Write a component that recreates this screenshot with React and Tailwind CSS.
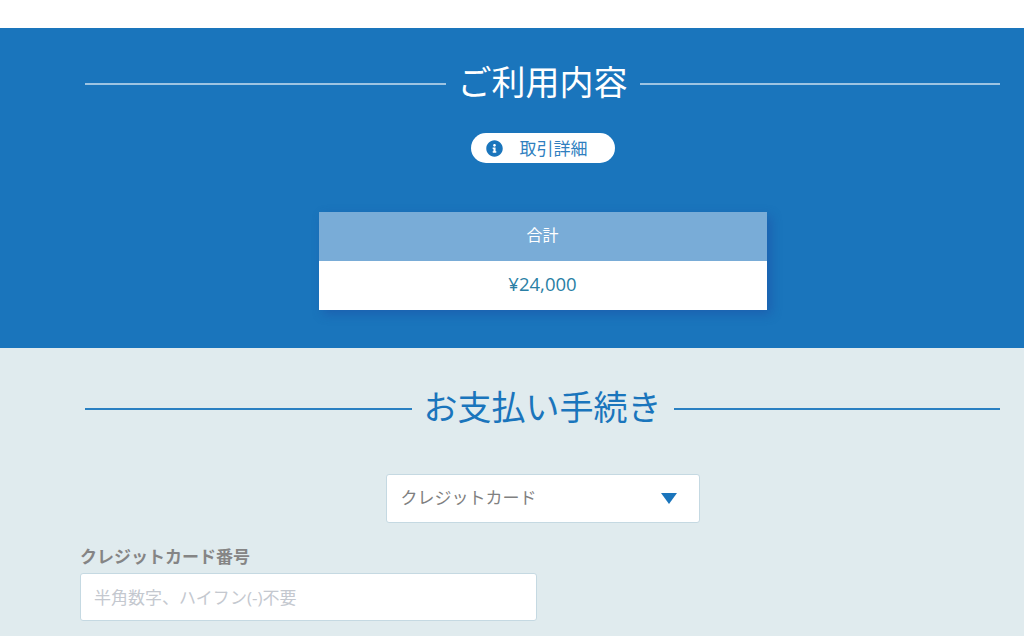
import React from "react";

const font = {
  fontFamily: '"Open Sans", "Noto Sans CJK JP", sans-serif',
};

function Heading({ children, line, text }) {
  return (
    <div className="flex items-center">
      <div className={`flex-1 h-[2px] ${line}`}></div>
      <h2 className={`px-[12px] pb-[4px] text-[34px] leading-[44px] font-normal ${text}`}>{children}</h2>
      <div className={`flex-1 h-[2px] ${line}`}></div>
    </div>
  );
}

function InfoIcon() {
  return (
    <svg width="17" height="17" viewBox="0 0 512 512" fill="#1a75bc">
      <path d="M256 8C119 8 8 119 8 256s111 248 248 248 248-111 248-248S393 8 256 8zm0 110c23 0 42 19 42 42s-19 42-42 42-42-19-42-42 19-42 42-42zm56 254c0 7-5 12-12 12h-88c-7 0-12-5-12-12v-24c0-7 5-12 12-12h12v-64h-12c-7 0-12-5-12-12v-24c0-7 5-12 12-12h64c7 0 12 5 12 12v100h12c7 0 12 5 12 12v24z" />
    </svg>
  );
}

export default function App() {
  return (
    <div className="w-[1024px] h-[636px] overflow-hidden bg-white" style={font}>
      <div className="h-[28px] bg-white"></div>

      <section className="h-[320px] bg-[#1a75bc] pt-[32px] pl-[85px] pr-[24px]">
        <Heading line="bg-[#9dc4e2]" text="text-white">ご利用内容</Heading>

        <div className="flex justify-center mt-[25px]">
          <button className="w-[144px] h-[30px] rounded-full bg-white flex items-center pl-[15px] text-[#2f7fbf] text-[17px]">
            <InfoIcon />
            <span className="ml-[17px] pt-[2px]">取引詳細</span>
          </button>
        </div>

        <div className="w-[448px] mx-auto mt-[49px] shadow-[4px_4px_10px_rgba(30,70,160,0.45)]">
          <div className="h-[49px] bg-[#79acd7] flex items-center justify-center text-white text-[16px] pb-[3px]">合計</div>
          <div className="h-[49px] bg-white flex items-center justify-center text-[#2a7fa5] text-[18.5px] pb-[3px]">¥24,000</div>
        </div>
      </section>

      <section className="h-[288px] bg-[#e0ebee] pt-[37px]">
        <div className="pl-[85px] pr-[24px]">
          <Heading line="bg-[#2a80c2]" text="text-[#1a75bc]">お支払い手続き</Heading>

          <div className="flex justify-center mt-[41px]">
            <div className="w-[314px] h-[49px] bg-white border border-[#c5d9e2] rounded-[3px] flex items-center justify-between pl-[14px] pr-[22px] text-[17px] text-[#808080]">
              <span className="pb-[2px]">クレジットカード</span>
              <svg width="16" height="11" viewBox="0 0 16 11" fill="#1a75bc">
                <path d="M0 0h16L8 11z" />
              </svg>
            </div>
          </div>
        </div>

        <div className="ml-[80px] mt-[23px] w-[457px]">
          <label className="block text-[17px] leading-[22px] font-bold text-[#858585]">クレジットカード番号</label>
          <input
            className="mt-[5px] w-full h-[48px] bg-white border border-[#c5d9e2] rounded-[3px] px-[13px] text-[17px] outline-none placeholder:text-[#c4c8cf]"
            placeholder="半角数字、ハイフン(-)不要"
          />
        </div>
      </section>
    </div>
  );
}
